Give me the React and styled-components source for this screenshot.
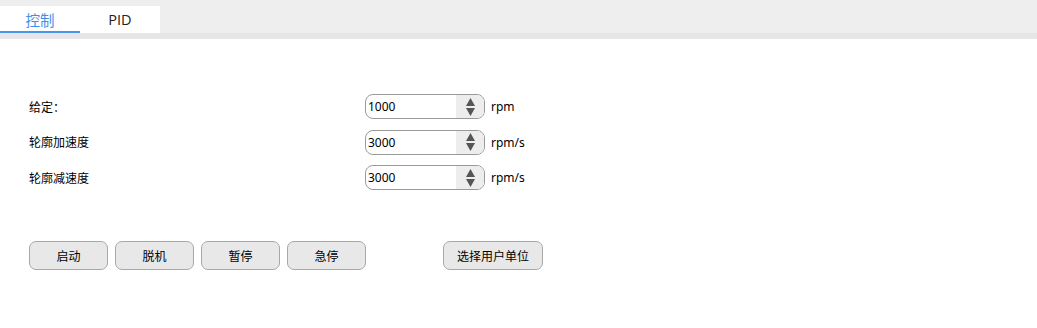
import { createGlobalStyle } from "styled-components";
import styled from "styled-components";
import { Fragment, useState } from "react";

const GlobalStyle = createGlobalStyle`
  body {
    margin: 0;
    background: #ffffff;
    font-family: "Noto Sans", "Noto Sans CJK SC", sans-serif;
    color: #000;
  }
`;

const TabBar = styled.div`
  display: flex;
  align-items: flex-end;
  height: 33px;
  padding-top: 6px;
  box-sizing: border-box;
  background: #eeeeee;
`;

const Tab = styled.div`
  width: 80px;
  height: 27px;
  box-sizing: border-box;
  display: flex;
  align-items: center;
  justify-content: center;
  padding-top: 1px;
  background: #ffffff;
  font-family: "Open Sans", "Noto Sans CJK SC", sans-serif;
  font-size: 14.5px;
  color: ${(p) => (p.$active ? "#3d8ee8" : "#222")};
  border-bottom: 2px solid ${(p) => (p.$active ? "#4a94ea" : "#ffffff")};
`;

const Divider = styled.div`
  height: 6px;
  background: #e6e6e6;
`;

const Content = styled.div`
  padding: 55px 0 0 29px;
`;

const Form = styled.div`
  display: grid;
  grid-template-columns: 330px 120px auto;
  column-gap: 6px;
  row-gap: 10.5px;
  align-items: center;
  font-size: 12px;
`;

const Label = styled.div`
  font-size: 12px;
`;

const SpinBox = styled.div`
  display: flex;
  height: 25px;
  box-sizing: border-box;
  border: 1px solid #9a9a9a;
  border-radius: 8px;
  overflow: hidden;
  background: #fff;
`;

const SpinInput = styled.input`
  flex: 1;
  min-width: 0;
  border: none;
  outline: none;
  padding: 0 0 0 2px;
  font-family: "Noto Sans", sans-serif;
  font-size: 12px;
  color: #000;
  background: transparent;
`;

const SpinArrows = styled.div`
  width: 28px;
  display: flex;
  flex-direction: column;
  align-items: center;
  justify-content: center;
  gap: 2px;
  background: #ededed;
`;

const Unit = styled.div`
  font-size: 12px;
`;

const Buttons = styled.div`
  display: flex;
  gap: 7px;
  margin-top: 51px;
`;

const Button = styled.button`
  width: ${(p) => p.$w || 79}px;
  height: 29px;
  margin-left: ${(p) => p.$gapLeft || 0}px;
  border: 1px solid #a8a8a8;
  border-radius: 7px;
  background: #e8e8e8;
  font-family: "Noto Sans CJK SC", sans-serif;
  font-size: 12px;
  color: #000;
  padding: 0;
`;

const Arrow = ({ up }) => (
  <svg width="9" height="8" viewBox="0 0 9 8">
    <path d={up ? "M4.5 0 L9 8 L0 8 Z" : "M0 0 L9 0 L4.5 8 Z"} fill="#555" />
  </svg>
);

const Spin = ({ value }) => {
  const [v, setV] = useState(value);
  return (
    <SpinBox>
      <SpinInput value={v} onChange={(e) => setV(e.target.value)} />
      <SpinArrows>
        <Arrow up />
        <Arrow />
      </SpinArrows>
    </SpinBox>
  );
};

const rows = [
  { label: "给定：", value: "1000", unit: "rpm" },
  { label: "轮廓加速度", value: "3000", unit: "rpm/s" },
  { label: "轮廓减速度", value: "3000", unit: "rpm/s" },
];

export default function App() {
  const [tab, setTab] = useState(0);
  return (
    <>
      <GlobalStyle />
      <TabBar>
        <Tab $active={tab === 0} onClick={() => setTab(0)}>
          控制
        </Tab>
        <Tab $active={tab === 1} onClick={() => setTab(1)}>
          PID
        </Tab>
      </TabBar>
      <Divider />
      <Content>
        <Form>
          {rows.map((r) => (
            <Fragment key={r.label}>
              <Label>{r.label}</Label>
              <Spin value={r.value} />
              <Unit>{r.unit}</Unit>
            </Fragment>
          ))}
        </Form>
        <Buttons>
          <Button>启动</Button>
          <Button>脱机</Button>
          <Button>暂停</Button>
          <Button>急停</Button>
          <Button $w={100} $gapLeft={70}>
            选择用户单位
          </Button>
        </Buttons>
      </Content>
    </>
  );
}
